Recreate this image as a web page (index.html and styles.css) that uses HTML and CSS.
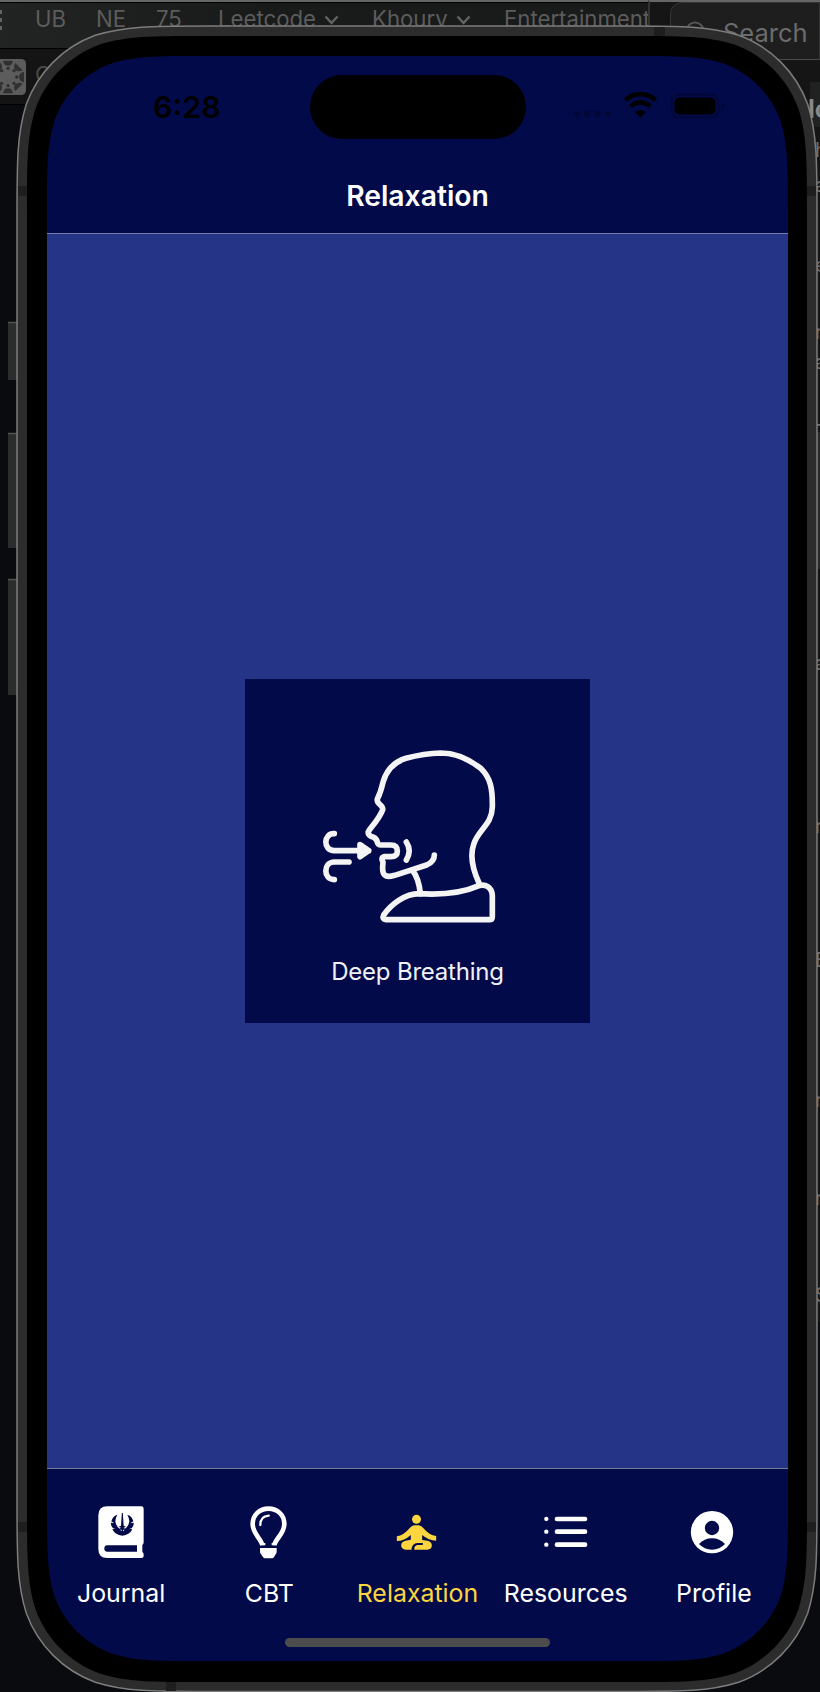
FILE: index.html
```
<!DOCTYPE html>
<html lang="en">
<head>
<meta charset="utf-8">
<title>Relaxation</title>
<link rel="stylesheet" href="styles.css">
</head>
<body>
<div class="desktop">
  <div class="browser">
    <div class="bookmarks">
      <svg class="apps" width="3" height="22" viewBox="0 0 3 22"><path fill="#666" d="M0 1h2v4H0zM0 9h2v4H0zM0 17h2v4H0z"/></svg><span class="bm" style="left:35px">UB</span><span class="bm" style="left:96px">NE</span><span class="bm" style="left:156px">75</span>
      <span class="bm" style="left:218px">Leetcode <svg width="15" height="10" viewBox="0 0 15 10"><path d="M1.500 1.500l6 6.500 6-6.500"/></svg></span>
      <span class="bm" style="left:372px">Khoury <svg width="15" height="10" viewBox="0 0 15 10"><path d="M1.500 1.500l6 6.500 6-6.500"/></svg></span>
      <span class="bm" style="left:504px">Entertainment</span>
    </div>
    <div class="tabs">
      <svg class="favicon" width="26" height="36" viewBox="0 0 78 108"><rect x="-30" width="108" height="108" rx="14" fill="#5c5c5c"/><g fill="#303030"><path d="M9 5h30q-3 15-15 15T9 5zM9 103h30q-3-15-15-15t-15 15zM72 38v32q-15-3-15-16t15-16zM46 12l22 22q-14 6-22-2t0-20zM46 96l22-22q-14-6-22 2t0 20zM2 12q8 12 0 20l-6 2V14zM2 96q8-12 0-20l-6-2v20z"/><circle cx="24" cy="28" r="5"/><circle cx="24" cy="80" r="5"/><circle cx="50" cy="54" r="5"/><circle cx="42" cy="35" r="5"/><circle cx="42" cy="73" r="5"/><circle cx="5" cy="35" r="5"/><circle cx="5" cy="73" r="5"/></g></svg>
      <span>C</span>
    </div>
  </div>
  <div class="mail">
    <div class="search"><svg width="24" height="24" viewBox="0 0 24 24"><circle cx="10" cy="10" r="8.500"/><path d="M16 16l6 6"/></svg><span>Search</span></div>
    <div class="thread"><b>lo</b><i style="top:130px">h</i><i style="top:165px">a</i><i style="top:245px">e</i><i style="top:312px">r</i><i style="top:342px">a</i><i style="top:412px">T</i><i style="top:643px">a</i><i style="top:806px">r</i><i style="top:940px">B</i><i style="top:1080px">r</i><i style="top:1178px">r</i><i style="top:1275px">S</i></div>
    <div class="selected"></div>
  </div>
</div>

<div class="phone">
  <svg class="frame" width="820" height="1692" viewBox="0 0 820 1692">
    <g fill="#2c2c2c"><path d="M8 322h9v58H8zM8 433h9v115H8zM8 579h9v116H8z"/></g>
    <path d="M8 322.500h9M8 433.500h9M8 579.500h9" stroke="#515151" stroke-width="1.500"/>
    <path fill="#2c2c2c" stroke="#7c7c7c" stroke-width="1.500" d="M206.600 26H627.400c54.600 0 81.900 0 111.300 9.300c32.100 11.700 57.300 36.900 69 69c9.300 29.400 9.300 56.700 9.300 111.300V1501.900c0 54.600 0 81.900-9.300 111.300c-11.700 32.100-36.900 57.300-69 69c-29.400 9.300-56.700 9.300-111.300 9.300H206.600c-54.600 0-81.900 0-111.300-9.300c-32.100-11.700-57.300-36.900-69-69c-9.300-29.400-9.300-56.700-9.300-111.300V215.600c0-54.600 0-81.900 9.300-111.300c11.700-32.100 36.900-57.300 69-69c29.400-9.300 56.700-9.300 111.300-9.300z"/>
    <path fill="#1e1e1e" d="M18 186h9v10h-9zM807 186h9v10h-9zM18 1522h9v10h-9zM807 1522h9v10h-9zM654 27h11v9h-11zM166 1682h10v9h-10z"/>
    <path d="M202.800 36H631.200c50.600 0 75.900 0 103.200 8.600c29.700 10.800 53.200 34.300 64 64c8.600 27.300 8.600 52.600 8.600 103.200V1506.200c0 50.600 0 75.900-8.600 103.200c-10.800 29.700-34.300 53.200-64 64c-27.300 8.600-52.600 8.600-103.200 8.600H202.800c-50.600 0-75.900 0-103.200-8.600c-29.700-10.800-53.200-34.300-64-64c-8.600-27.300-8.600-52.600-8.600-103.200V211.800c0-50.600 0-75.900 8.600-103.200c10.800-29.700 34.300-53.200 64-64c27.300-8.600 52.600-8.600 103.200-8.600z"/>
  </svg>
  <div class="screen">
    <div class="statusbar">
      <span class="time">6:28</span>
      <span class="island"></span>
      <svg class="signals" width="147" height="28" viewBox="0 0 147 28">
        <g fill="#020738"><rect x="1" y="19" width="6" height="6" rx="2"/><rect x="11" y="19" width="6" height="6" rx="2"/><rect x="21.500" y="19" width="6" height="6" rx="2"/><rect x="32" y="19" width="6" height="6" rx="2"/></g>
        <g fill="none" stroke="#000" stroke-width="4.600"><path d="M52.500 8.200a21.500 21.500 0 0 1 30 0M58 14.300a13.500 13.500 0 0 1 19 0"/></g>
        <path d="M67.500 25.500l-5.300-5.300q5.300-4.300 10.600 0z"/>
        <rect x="98.500" y="2.500" width="47" height="23" rx="7.500" fill="none" stroke="#020738" stroke-width="2"/>
        <rect x="101.500" y="5.500" width="41" height="17" rx="5"/>
      </svg>
      <svg class="nub" width="4" height="8" viewBox="0 0 4 8"><path fill="#020738" d="M0 0q3.500 1 3.500 4T0 8z"/></svg>
    </div>
    <h1 class="title">Relaxation</h1>
    <main class="content">
      <div class="card">
        <svg width="180" height="180" viewBox="270 230 540 540" fill="none" stroke="#f4f4f4" stroke-width="17" stroke-linecap="round" stroke-linejoin="round">
          <path d="M747 638C725 590 722 548 731 522C745 477 786 464 787 410C788 355 782 323 752 294C714 264 676 248 632 248C598 249 558 256 528 264C488 276 467 307 459 336C453 362 452 366 442 386C438 402 461 403 458 418C450 440 432 461 418 479C409 491 421 498 431 501C448 509 436 524 453 524H483C498 524 502 532 502 542C502 552 498 559 483 559H462C453 561 456 570 459 576C458 591 455 604 463 613C471 621 480 619 494 615L590 584C604 578 613 571 613 554"/>
          <path d="M548 601C562 618 568 640 571 670M529 515Q546 541 529 569"/>
          <path d="M468 748H778Q787 748 787 739V676C786 650 765 640 747 646C700 667 636 674 568 670C524 670 483 703 461 734Q455 746 468 748z"/>
          <path d="M313 490C280 488 278 541 313 541H416M390 523L416 541L390 559zM313 628C278 627 280 575 313 575H357"/>
          <path fill="#f4f4f4" stroke="none" d="M388 522l30 19-30 18z"/>
        </svg>
        <p>Deep Breathing</p>
      </div>
    </main>
    <nav class="tabbar">
      <a class="tab"><svg viewBox="273 155 180 180"><path fill="#fff" d="M322 168H424Q431 168 431 175V276Q431 281 427 284V305Q431 308 431 312V317Q431 323 424 323H322Q295 323 295 296V195Q295 168 322 168z"/><path fill="#020a4a" d="M322 285H411V304H322Q313 304 313 294.500T322 285z"/><path fill="#020a4a" d="M352 193Q337 198 334 213L343 219 333 217Q332 228 339 234L346 235 337 237Q346 255 367 256Q388 255 397 237L388 235 395 234Q402 228 401 217L391 219 400 213Q397 198 382 193Q390 208 387 218Q384 229 375 235L371 232 378 229 371 226 368.500 188H365.500L363 226 356 229 363 232 359 235Q350 229 347 218Q344 208 352 193z"/><path fill="#fff" d="M365 243l-5-5 5 0zM369 243l5-5-5 0z"/></svg><span>Journal</span></a>
      <a class="tab"><svg viewBox="718 155 180 180"><path fill="none" stroke="#fff" stroke-width="14" d="M788 285C786 266 759 251 759 221C759 193 780 175 806.500 175C833 175 854 193 854 221C854 251 826 266 824 285"/><path fill="none" stroke="#fff" stroke-width="7" stroke-linecap="round" d="M782 224C782 207 791 197 807 196"/><path fill="#fff" d="M781 293h50v12q0 3-3 7l-5 8q-2 4-6 4h-21q-4 0-6-4l-6-8q-3-4-3-7zM781 278h16v7h-14zM816 278h16l-2 7h-14z"/></svg><span>CBT</span></a>
      <a class="tab active"><svg viewBox="22.500 5 180 180" fill="#fcd53f"><circle cx="111" cy="57" r="13.500"/><path d="M104 75H118Q126 76 132 84Q149 105 170 107V121Q148 121 128 104V119L144 121Q157 124 157 135Q157 148 143 148H104Q104 134 116 134H130V128H114Q98 128 96 148H79Q65 147 65 135Q65 124 78 121L94 118V104Q74 122 52 122V108Q73 105 90 84Q96 76 104 75z"/></svg><span>Relaxation</span></a>
      <a class="tab"><svg viewBox="376 155 180 180" fill="#fff"><circle cx="407" cy="206" r="6.500"/><circle cx="407" cy="244" r="6.500"/><circle cx="407" cy="283" r="6.500"/><rect x="432" y="199" width="98" height="14" rx="7"/><rect x="432" y="237" width="98" height="14" rx="7"/><rect x="432" y="276" width="98" height="14" rx="7"/></svg><span>Resources</span></a>
      <a class="tab"><svg viewBox="821 155 180 180"><circle cx="905" cy="245.500" r="63.500" fill="#fff"/><g fill="#020a4a"><circle cx="905" cy="233" r="21.500"/><path d="M866 281Q882 264 905 264T944 281Q928 298 905 298T866 281z"/></g></svg><span>Profile</span></a>
      <span class="home"></span>
    </nav>
  </div>
</div>
</body>
</html>
```
FILE: styles.css
```
* { box-sizing: border-box; }
body {
  margin: 0;
  width: 820px;
  height: 1692px;
  position: relative;
  overflow: hidden;
  background: #090b0f;
  font-family: Inter, "Liberation Sans", sans-serif;
}

/* Windows behind the simulator */
.desktop { position: absolute; inset: 0; overflow: hidden; }
.browser { position: absolute; left: 0; top: 0; width: 648px; height: 105px; border-top: 2px solid #666; background: #141414; border-bottom: 1px solid #000; }
.bookmarks { position: relative; height: 47px; overflow: hidden; background: linear-gradient(90deg, #222423, #191a1a 40%); border-top: 1px solid #000; border-bottom: 1px solid #000; }
.bm { position: absolute; top: 2px; font-size: 22.200px; line-height: 28px; color: #5c5c5c; white-space: nowrap; }
.bm svg { margin-left: 2px; vertical-align: 2px; fill: none; stroke: #626262; stroke-width: 2.500; }
.apps { position: absolute; left: 0; top: 6px; }
.tabs { display: flex; gap: 9px; padding-top: 10px; color: #484848; font-size: 22px; }
.tabs span { margin-top: 2px; }
.mail { position: absolute; left: 648px; top: 0; width: 172px; height: 1692px; border-left: 2px solid #333; border-top: 2px solid #666; background: linear-gradient(#151515, #151515) 0 0 / 100% 1320px no-repeat; }
.search { height: 58px; display: flex; align-items: center; gap: 14px; margin-left: 20px; padding: 3px 0 0 14px; border: 1px solid #333; border-bottom-color: #4a4a4a; border-radius: 12px 0 0 0; background: #1e1e1e; font-size: 25.500px; color: #6b6b6b; }
.search svg { fill: none; stroke: #555; stroke-width: 2; }
.thread { position: absolute; inset: 80px 0 0 160px; height: 45px; background: #202121; color: #888; }
.thread b { position: absolute; left: -2px; top: 12px; font-size: 25px; }
.thread i { position: absolute; left: 5px; font: 20px Inter, sans-serif; color: #707070; margin-top: -74px; }
.selected { position: absolute; right: 0; top: 430px; width: 3px; height: 137px; background: #2a2a2a; }

/* Device */
.phone { position: absolute; inset: 0; padding: 56px 32px 31px 47px; }
.frame { position: absolute; inset: 0; }
.screen {
  position: relative;
  height: 1605px;
  width: 741px;
  display: flex;
  flex-direction: column;
  background: #020a4a;
  clip-path: path("M156 0H585c45 0 67.400 0 91.600 7.600c26.400 9.600 47.200 30.400 56.800 56.800c7.600 24.200 7.600 46.600 7.600 91.600V1449c0 45 0 67.400-7.600 91.600c-9.600 26.400-30.400 47.200-56.800 56.800c-24.200 7.600-46.600 7.600-91.600 7.600H156c-45 0-67.400 0-91.600-7.600c-26.400-9.600-47.200-30.400-56.800-56.800c-7.600-24.200-7.600-46.600-7.600-91.600V156c0-45 0-67.400 7.600-91.600c9.600-26.400 30.400-47.200 56.800-56.800c24.200-7.600 46.600-7.600 91.600-7.600z");
}
.statusbar { display: flex; height: 101px; padding-top: 19px; }
.time { width: 157px; margin-left: 106px; margin-top: 12px; font-size: 30.500px; line-height: 40px; font-weight: 600; color: #000; }
.island { width: 216px; height: 64px; border-radius: 32px; background: #000; }
.signals { margin: 16.500px 0 0 47px; }
.nub { margin: 27px 0 0 1px; }
.title { margin: 0; height: 77px; border-bottom: 1px solid #747ba8; text-align: center; font-size: 28.300px; line-height: 78px; font-weight: 600; color: #fff; }
.content { height: 1234px; display: flex; align-items: center; justify-content: center; background: #253487; }
.card { width: 345px; height: 344px; padding-top: 68px; background: #020a4a; text-align: center; }
.card svg { display: block; margin-left: 75px; }
.card p { margin: 29px 0 0; font-size: 24px; line-height: 31px; letter-spacing: -0.200px; color: #f1f1f5; }
.tabbar { position: relative; flex: 1; display: grid; grid-template-columns: repeat(5, 1fr); border-top: 1px solid #747994; }
.tab { display: flex; flex-direction: column; align-items: center; padding-top: 33px; color: #fff; font-size: 24.900px; line-height: 32px; }
.tab svg { width: 60px; height: 60px; flex: none; }
.tab span { margin-top: 15px; white-space: nowrap; }
.active { color: #fcd53f; }
.home { position: absolute; left: 238px; top: 169px; width: 265px; height: 9px; border-radius: 5px; background: #4c4c4c; }
```
